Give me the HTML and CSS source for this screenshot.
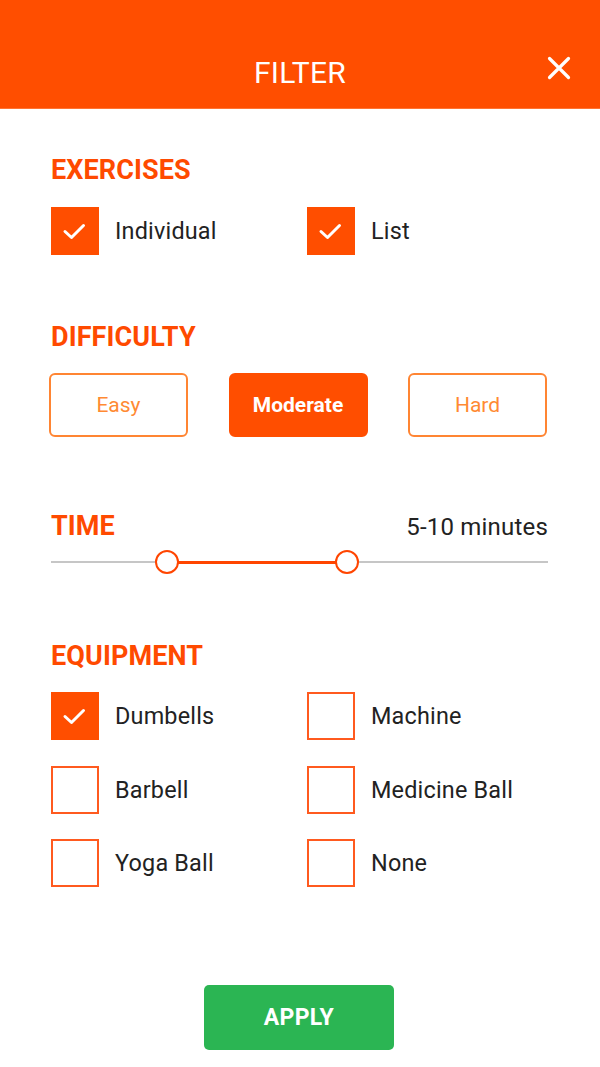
FILE: index.html
```html
<!DOCTYPE html>
<html lang="en">
<head>
<meta charset="utf-8">
<title>Filter</title>
<link rel="stylesheet" href="styles.css">
</head>
<body>
<header class="topbar">
  <span class="spacer"></span>
  <h1 class="title">FILTER</h1>
  <button class="close" aria-label="Close">
    <svg width="24" height="24" viewBox="0 0 24 24"><path d="M2.5 2.5 L21.5 21.5 M21.5 2.5 L2.5 21.5" stroke="#fff" stroke-width="3.2" stroke-linecap="round" fill="none"/></svg>
  </button>
</header>

<main class="content">
  <section class="section exercises">
    <h2 class="heading">EXERCISES</h2>
    <div class="check-grid">
      <label class="check-item"><span class="box checked"><svg width="48" height="48" viewBox="0 0 48 48"><path d="M14 24.5 L20.5 30.5 L32.5 18.5" stroke="#fff" stroke-width="3" stroke-linecap="round" stroke-linejoin="round" fill="none"/></svg></span><span class="label">Individual</span></label>
      <label class="check-item"><span class="box checked"><svg width="48" height="48" viewBox="0 0 48 48"><path d="M14 24.5 L20.5 30.5 L32.5 18.5" stroke="#fff" stroke-width="3" stroke-linecap="round" stroke-linejoin="round" fill="none"/></svg></span><span class="label">List</span></label>
    </div>
  </section>

  <section class="section difficulty">
    <h2 class="heading">DIFFICULTY</h2>
    <div class="seg">
      <button class="seg-btn">Easy</button>
      <button class="seg-btn active">Moderate</button>
      <button class="seg-btn">Hard</button>
    </div>
  </section>

  <section class="section time">
    <div class="time-row">
      <h2 class="heading">TIME</h2>
      <span class="time-value">5-10 minutes</span>
    </div>
    <div class="slider">
      <div class="track"></div>
      <div class="range" style="left:23.4%; width:36.1%;"></div>
      <span class="thumb" style="left:23.4%;"></span>
      <span class="thumb" style="left:59.5%;"></span>
    </div>
  </section>

  <section class="section equipment">
    <h2 class="heading">EQUIPMENT</h2>
    <div class="check-grid eq-grid">
      <label class="check-item"><span class="box checked"><svg width="48" height="48" viewBox="0 0 48 48"><path d="M14 24.5 L20.5 30.5 L32.5 18.5" stroke="#fff" stroke-width="3" stroke-linecap="round" stroke-linejoin="round" fill="none"/></svg></span><span class="label">Dumbells</span></label>
      <label class="check-item"><span class="box"></span><span class="label">Machine</span></label>
      <label class="check-item"><span class="box"></span><span class="label">Barbell</span></label>
      <label class="check-item"><span class="box"></span><span class="label">Medicine Ball</span></label>
      <label class="check-item"><span class="box"></span><span class="label">Yoga Ball</span></label>
      <label class="check-item"><span class="box"></span><span class="label">None</span></label>
    </div>
  </section>

  <div class="actions">
    <button class="apply">APPLY</button>
  </div>
</main>
</body>
</html>
```

FILE: styles.css
```css
* { box-sizing: border-box; }

html, body {
  margin: 0;
  padding: 0;
  background: #fff;
  font-family: Roboto, "Liberation Sans", sans-serif;
  color: #222;
}

button {
  font-family: inherit;
  cursor: pointer;
}

.topbar {
  height: 109px;
  background: #ff4e00;
  border-bottom: 1px solid #ff7433;
  display: grid;
  grid-template-columns: 1fr auto 1fr;
  align-items: start;
}

.title {
  margin: 55px 0 0;
  font-size: 30px;
  line-height: 36px;
  font-weight: 400;
  color: #fff;
  letter-spacing: 0.3px;
}

.close {
  justify-self: end;
  margin: 56px 29px 0 0;
  padding: 0;
  border: 0;
  background: transparent;
  width: 24px;
  height: 24px;
  display: block;
}
.close svg { display: block; }

.content {
  padding: 0 52px 0 51px;
}

.heading {
  margin: 0;
  font-size: 27px;
  line-height: 32px;
  font-weight: 700;
  color: #ff4a00;
  letter-spacing: 0.1px;
}

.exercises { padding-top: 45px; }
.exercises .heading { margin-bottom: 21px; }

.check-grid {
  display: grid;
  grid-template-columns: 256px 1fr;
}

.check-item {
  display: flex;
  align-items: center;
  gap: 16px;
  height: 48px;
}

.box {
  width: 48px;
  height: 48px;
  flex: 0 0 48px;
  border: 2px solid #ff5a1f;
  background: #fff;
  display: block;
  position: relative;
}
.box.checked {
  background: #ff4e00;
  border-color: #ff4e00;
}
.box svg {
  position: absolute;
  left: -2px;
  top: -2px;
}

.label {
  font-size: 23.4px;
  line-height: 30px;
  color: #222;
  letter-spacing: 0.2px;
}

.difficulty { padding-top: 66px; }
.difficulty .heading { margin-bottom: 20px; }

.seg {
  display: grid;
  grid-template-columns: repeat(3, 139px);
  justify-content: space-between;
  margin-left: -2px;
  margin-right: 1px;
}

.seg-btn {
  height: 64px;
  border: 2px solid #ff8533;
  border-radius: 6px;
  background: #fff;
  color: #ff8a33;
  font-size: 21px;
  font-weight: 400;
  padding: 0;
}
.seg-btn.active {
  background: #ff4e00;
  border-color: #ff4e00;
  color: #fff;
  font-weight: 700;
}

.time { padding-top: 73px; }

.time-row {
  display: flex;
  justify-content: space-between;
  align-items: baseline;
}

.time-value {
  font-size: 24px;
  color: #222;
  letter-spacing: 0.2px;
}

.slider {
  position: relative;
  height: 24px;
  margin-top: 8px;
}

.track {
  position: absolute;
  left: 0;
  right: 0;
  top: 11px;
  height: 2px;
  background: #c6c6c6;
}

.range {
  position: absolute;
  top: 10.5px;
  height: 3px;
  background: #ff4500;
}

.thumb {
  position: absolute;
  top: 0;
  width: 24px;
  height: 24px;
  margin-left: -12px;
  border-radius: 50%;
  border: 2.5px solid #ff4500;
  background: #fff;
}

.equipment { padding-top: 66px; }
.equipment .heading { margin-bottom: 20px; }

.eq-grid { row-gap: 25.5px; }

.actions {
  display: flex;
  justify-content: center;
  padding-top: 98px;
  margin-left: -1px;
}

.apply {
  width: 190px;
  height: 65px;
  border: 0;
  border-radius: 5px;
  background: #2bb553;
  color: #fff;
  font-size: 23px;
  font-weight: 700;
  letter-spacing: 0.3px;
}
```
